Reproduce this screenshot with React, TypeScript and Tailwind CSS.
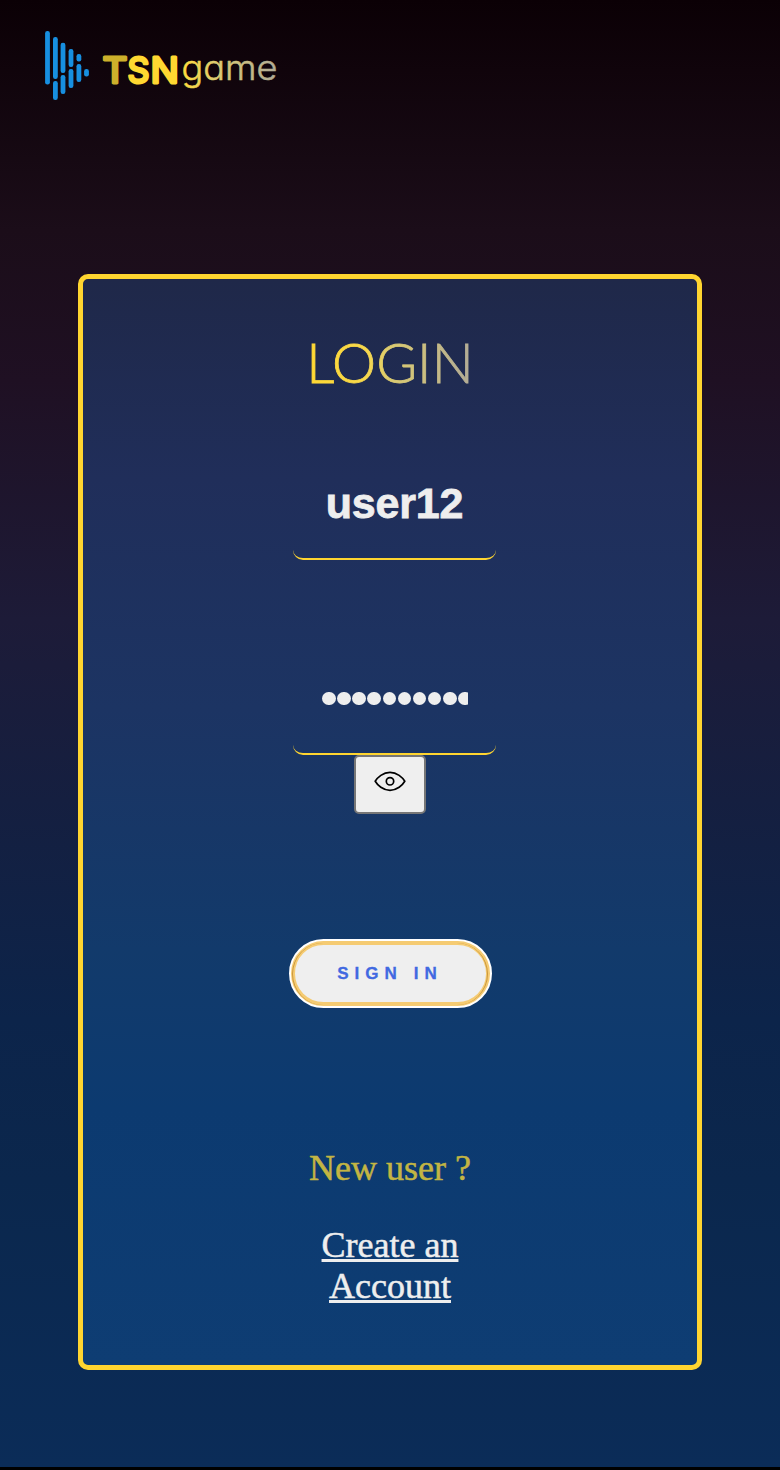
import React from "react";

const bars: [number, number, number][] = [
  [47.5, 31, 84.5],
  [55.4, 37, 79],
  [55.4, 81, 100],
  [63, 42.7, 73],
  [63, 75, 94],
  [71, 49, 67],
  [71, 69, 88],
  [78.9, 54, 61.5],
  [78.9, 64, 82],
  [86.5, 69, 76.5],
];

function Logo() {
  return (
    <svg width="300" height="120" viewBox="0 0 300 120" role="img" aria-label="TSN game">
      <defs>
        <linearGradient id="game" gradientUnits="userSpaceOnUse" x1="182" x2="277" y1="0" y2="0">
          <stop offset="0" stopColor="#ffdc3c" />
          <stop offset="0.35" stopColor="#dccb70" />
          <stop offset="1" stopColor="#b1ab98" />
        </linearGradient>
      </defs>
      {bars.map(([x, top, bottom]) => (
        <rect key={`${x}-${top}`} x={x - 2.4} y={top} width="4.8" height={bottom - top} rx="2.2" fill="#178fe0" />
      ))}
      <g fontFamily="Inter, sans-serif" fontWeight="400" fontSize="36" strokeWidth="2.9" strokeLinejoin="round">
        <text x="102.6" y="82.5" textLength="25" lengthAdjust="spacingAndGlyphs" fill="#cdb02b" stroke="#cdb02b">T</text>
        <text x="127.6" y="82.5" textLength="22" lengthAdjust="spacingAndGlyphs" fill="#ffd831" stroke="#ffd831">S</text>
        <text x="150.4" y="82.5" textLength="28.4" lengthAdjust="spacingAndGlyphs" fill="#ffd831" stroke="#ffd831">N</text>
      </g>
      <text x="181.5" y="80.3" textLength="96" lengthAdjust="spacingAndGlyphs" fontFamily="Inter, sans-serif" fontWeight="300" fontSize="35" fill="url(#game)" stroke="url(#game)" strokeWidth="0.5" strokeLinejoin="round" className="[font-feature-settings:'cv11'_1]">game</text>
    </svg>
  );
}

export default function App() {
  return (
    <div className="h-[1470px] w-full bg-black">
      <div className="flex h-[1467px] w-full flex-col items-center bg-[linear-gradient(180deg,#0b0005_0px,#1b0d19_230px,#1f1023_380px,#1d1b38_620px,#151f40_800px,#0c244a_1020px,#0b274d_1180px,#0b2c58_1467px)]">
        <header className="h-[274px] w-full"><Logo /></header>
        <main className="flex h-[1096px] w-[624px] flex-col items-center rounded-[10px] border-[5px] border-[#ffd530] bg-[linear-gradient(180deg,#1f2849_0px,#202e5a_200px,#1c3463_430px,#123a6b_670px,#0c3a70_830px,#0e3d73_1086px)]">
          <h1 className="mt-[48px] h-[72px]">
            <svg width="180" height="72" viewBox="0 0 180 72" role="img" aria-label="LOGIN">
              <defs>
                <linearGradient id="login" x1="0" x2="1" y1="0" y2="0">
                  <stop offset="0" stopColor="#ffd831" />
                  <stop offset="0.35" stopColor="#f9d94b" />
                  <stop offset="0.5" stopColor="#dccb70" />
                  <stop offset="1" stopColor="#b1ab98" />
                </linearGradient>
              </defs>
              <text x="6.3" y="55.8" textLength="167.4" lengthAdjust="spacingAndGlyphs" fontFamily="Lato, sans-serif" fontWeight="300" fontSize="55" fill="url(#login)" stroke="url(#login)" strokeWidth="0.8">LOGIN</text>
            </svg>
          </h1>
          <div className="ml-[9px] mt-[51px] flex h-[110px] w-[203px] justify-center rounded-[10px] border-b-2 border-[#ffd530] pt-[28px] font-['Liberation_Sans',sans-serif] text-[43px] font-bold leading-[50px] tracking-[-0.2px] text-[#eee] [-webkit-text-stroke:0.8px_#eee]">
            user12
          </div>
          <div className="ml-[9px] mt-[85px] flex h-[110px] w-[203px] rounded-[10px] border-b-2 border-[#ffd530] pl-[29px] pr-7">
            <div className="mt-[46.5px] flex h-[14px] gap-[1.65px] overflow-hidden">
              {Array.from({ length: 10 }, (_, i) => (
                <span key={i} className="h-[13.5px] w-[13.5px] shrink-0 rounded-full bg-[#eee]" />
              ))}
            </div>
          </div>
          <button aria-label="Show password" className="flex h-[59px] w-[72px] justify-center rounded-[5px] border-2 border-[#767676] bg-[#efefef] pt-[14px]">
            <svg width="32" height="21" viewBox="0 0 32 21" fill="none" stroke="#000" strokeWidth="1.7">
              <path d="M1.2 10.3C3.5 6.5 9 1.3 16 1.3S28.5 6.5 30.8 10.3C28.5 14.2 23 19.3 16 19.3S3.5 14.2 1.2 10.3Z" strokeLinejoin="round" />
              <circle cx="16" cy="10.3" r="3.7" />
            </svg>
          </button>
          <button className="mt-[125px] flex h-[69px] w-[203px] rounded-[35px] border-[2.5px] border-white bg-white">
            <span className="relative flex h-full w-full items-center justify-center rounded-[33px] border-4 border-[#f5cb72] bg-[#efefef] font-['Liberation_Sans',sans-serif] text-[17px] font-bold tracking-[6.05px] text-[#4169e1] [-webkit-text-stroke:0.3px_#4169e1]">
              <span className="absolute -inset-[2.5px] rounded-[31px] border-x-[1.5px] border-[#c9963d]" />
              SIGN IN
            </span>
          </button>
          <p className="mt-[139px] font-['Liberation_Serif',serif] text-[36px] leading-[42px] text-[#c3b543] [-webkit-text-stroke:0.5px_#c3b543]">New user ?</p>
          <a className="mt-[36px] w-[160px] text-center font-['Liberation_Serif',serif] text-[36px] leading-[41px] text-[#eee] underline decoration-[3px] [-webkit-text-stroke:0.5px_#eee]">Create an Account</a>
        </main>
      </div>
    </div>
  );
}
